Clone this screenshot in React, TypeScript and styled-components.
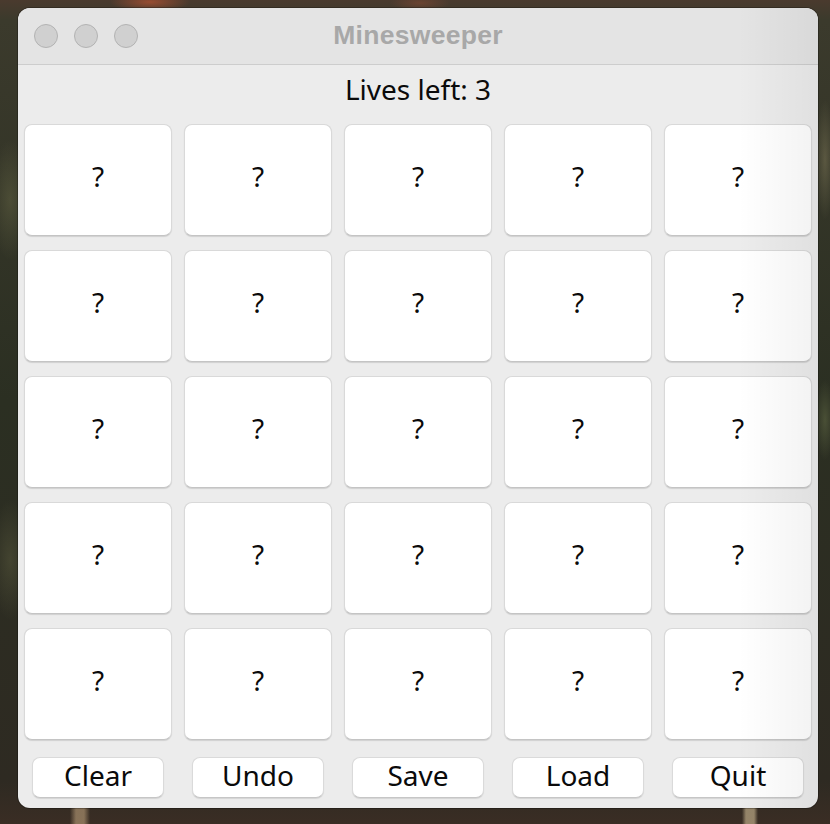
import React from "react";
import styled, { createGlobalStyle } from "styled-components";

const Global = createGlobalStyle`
  html, body {
    margin: 0;
    padding: 0;
  }
  body {
    width: 830px;
    height: 824px;
    overflow: hidden;
    font-family: "Noto Sans", "Liberation Sans", sans-serif;
    background:
      linear-gradient(to right, transparent 70px, rgba(200,170,130,0.55) 76px, rgba(200,170,130,0.55) 84px, transparent 90px) 0 808px / 100% 16px no-repeat,
      linear-gradient(to right, transparent 742px, rgba(210,190,150,0.6) 746px, rgba(210,190,150,0.6) 754px, transparent 758px) 0 808px / 100% 16px no-repeat,
      radial-gradient(ellipse 40px 10px at 150px 2px, rgba(170,80,50,0.8), transparent),
      radial-gradient(ellipse 30px 8px at 420px 3px, rgba(120,70,50,0.7), transparent),
      radial-gradient(ellipse 20px 60px at 10px 200px, rgba(120,120,80,0.35), transparent),
      radial-gradient(ellipse 20px 60px at 10px 560px, rgba(120,120,80,0.3), transparent),
      radial-gradient(ellipse 10px 40px at 825px 420px, rgba(130,140,90,0.35), transparent),
      radial-gradient(ellipse 10px 60px at 825px 160px, rgba(160,150,110,0.35), transparent),
      linear-gradient(to bottom, #4a3a2e 0px, #3b3a2c 20px, #2b2f22 400px, #2e2a22 780px, #3a2d24 824px);
  }
`;

const Desktop = styled.div`
  padding: 8px 0 0 18px;
`;

const Window = styled.div`
  position: relative;
  width: 800px;
  height: 800px;
  border-radius: 12px;
  overflow: hidden;
  background: #ececec;
  display: flex;
  flex-direction: column;
  box-shadow: 0 0 0 1px rgba(0, 0, 0, 0.25);

  &::after {
    content: "";
    position: absolute;
    inset: 0;
    pointer-events: none;
    background: linear-gradient(to right, rgba(0,0,0,0) 90%, rgba(0,0,0,0.035) 97%, rgba(0,0,0,0.05) 100%);
  }
`;

const TitleBar = styled.div`
  height: 56px;
  flex: none;
  background: #e4e4e4;
  border-bottom: 1px solid #cdcdcd;
  display: grid;
  grid-template-columns: 1fr auto 1fr;
  align-items: center;
`;

const Lights = styled.div`
  display: flex;
  gap: 16px;
  padding-left: 16px;
`;

const Light = styled.span`
  width: 22px;
  height: 22px;
  border-radius: 50%;
  background: #d0d0d0;
  border: 1px solid #b3b3b3;
`;

const Title = styled.div`
  font-family: "Liberation Sans", Arial, sans-serif;
  font-weight: bold;
  font-size: 26.5px;
  color: #a8a8a8;
  letter-spacing: 0.3px;
  padding-bottom: 2px;
`;

const Content = styled.div`
  flex: 1;
  display: flex;
  flex-direction: column;
  padding: 0 6px;
`;

const Status = styled.div`
  height: 52px;
  display: flex;
  align-items: center;
  justify-content: center;
  font-size: 28px;
  color: #0a0a0a;
  padding-bottom: 4px;
  box-sizing: border-box;
`;

const Board = styled.div`
  margin-top: 7px;
  display: grid;
  grid-template-columns: repeat(5, 148px);
  grid-auto-rows: 112px;
  column-gap: 12px;
  row-gap: 14px;
`;

const Cell = styled.button`
  all: unset;
  box-sizing: border-box;
  background: #ffffff;
  border-radius: 8px;
  border: 1px solid #d9d9d9;
  border-bottom-color: #c4c4c4;
  box-shadow: 0 1px 1px rgba(0, 0, 0, 0.12);
  display: flex;
  align-items: center;
  justify-content: center;
  font-family: "Noto Sans", "Liberation Sans", sans-serif;
  font-size: 28px;
  color: #0a0a0a;
  padding-bottom: 9px;
`;

const Controls = styled.div`
  margin: 17px -6px 0;
  display: grid;
  grid-template-columns: repeat(5, 160px);
  justify-items: center;
`;

const Action = styled.button`
  all: unset;
  box-sizing: border-box;
  width: 132px;
  height: 41px;
  background: #ffffff;
  border-radius: 8px;
  border: 1px solid #dadada;
  border-bottom-color: #c6c6c6;
  box-shadow: 0 1px 1px rgba(0, 0, 0, 0.1);
  display: flex;
  align-items: center;
  justify-content: center;
  font-family: "Noto Sans", "Liberation Sans", sans-serif;
  font-size: 28px;
  color: #0a0a0a;
  padding-bottom: 5px;
`;

const actions = ["Clear", "Undo", "Save", "Load", "Quit"];

export default function App() {
  return (
    <>
      <Global />
      <Desktop>
        <Window>
          <TitleBar>
            <Lights>
              <Light />
              <Light />
              <Light />
            </Lights>
            <Title>Minesweeper</Title>
            <div />
          </TitleBar>
          <Content>
            <Status>Lives left: 3</Status>
            <Board>
              {Array.from({ length: 25 }).map((_, i) => (
                <Cell key={i}>?</Cell>
              ))}
            </Board>
            <Controls>
              {actions.map((a) => (
                <Action key={a}>{a}</Action>
              ))}
            </Controls>
          </Content>
        </Window>
      </Desktop>
    </>
  );
}
